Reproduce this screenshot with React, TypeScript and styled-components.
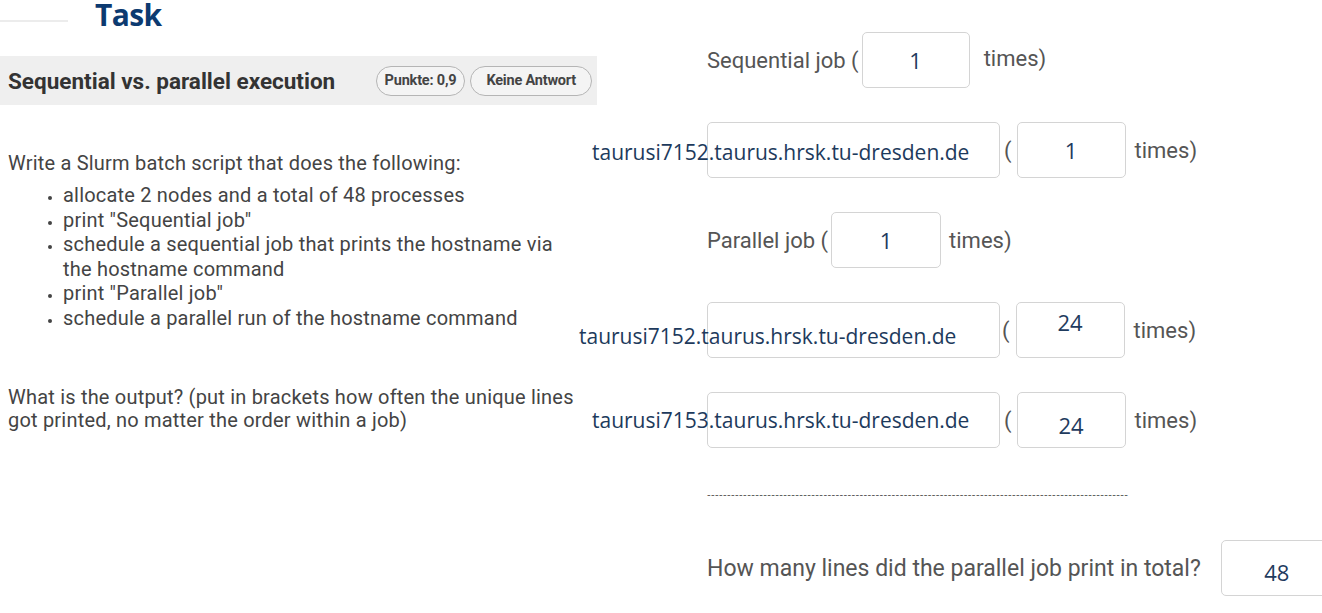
import React from "react";
import styled, { createGlobalStyle } from "styled-components";

const Global = createGlobalStyle`
  html, body { margin: 0; padding: 0; background: #ffffff; overflow: hidden; }
  body { font-family: Roboto, "Liberation Sans", Arial, sans-serif; }
`;

const Page = styled.div`
  display: grid;
  grid-template-columns: 597px 1fr;
  width: 1322px;
  height: 613px;
  overflow: hidden;
`;

const LeftCol = styled.div`
  display: flex;
  flex-direction: column;
`;

const TaskRow = styled.div`
  display: flex;
  align-items: center;
  height: 30px;
`;

const FaintRule = styled.span`
  width: 68px;
  height: 2px;
  background: #ececec;
  margin-top: 12px;
  margin-right: 27px;
`;

const TaskTitle = styled.h1`
  margin: 0;
  font-family: "Open Sans", "Noto Sans", sans-serif;
  font-weight: 700;
  font-size: 30px;
  line-height: 30px;
  letter-spacing: -0.6px;
  color: #0c3a70;
`;

const HeaderBar = styled.div`
  margin-top: 26px;
  height: 49px;
  background: #efefef;
  display: flex;
  align-items: center;
  padding: 0 5px 0 8px;
`;

const QTitle = styled.h2`
  margin: 0;
  flex: 1;
  font-family: Roboto, sans-serif;
  font-weight: 700;
  font-size: 22.5px;
  color: #333333;
  white-space: nowrap;
`;

const Badge = styled.span<{ $px: number }>`
  display: inline-flex;
  align-items: center;
  height: 28px;
  padding: 0 ${(p) => p.$px}px;
  margin-left: 5px;
  border: 1px solid #b5b5b5;
  border-radius: 15px;
  font-family: Roboto, sans-serif;
  font-weight: 700;
  font-size: 14.5px;
  letter-spacing: -0.2px;
  color: #444444;
  background: #f4f4f4;
  white-space: nowrap;
`;

const Body = styled.div`
  padding-left: 8px;
  font-family: Roboto, sans-serif;
  font-size: 20px;
  letter-spacing: 0.2px;
  color: #444444;
`;

const Para = styled.p<{ $top: number; $lh: number; $w?: number }>`
  margin: ${(p) => p.$top}px 0 0 0;
  line-height: ${(p) => p.$lh}px;
  max-width: ${(p) => p.$w ?? 600}px;
`;

const List = styled.ul`
  margin: 8px 0 0 0;
  padding-left: 55px;
  line-height: 24.6px;
  width: 505px;
  li::marker { font-size: 14px; }
`;

const RightCol = styled.div`
  display: flex;
  flex-direction: column;
  padding-left: 110px;
  padding-top: 32px;
`;

const Rows = styled.div`
  display: flex;
  flex-direction: column;
  gap: 34px;
`;

const Row = styled.div`
  display: flex;
  align-items: center;
  height: 56px;
`;

const Label = styled.span<{ $ml?: number; $dy?: number; $size?: number }>`
  font-family: Roboto, sans-serif;
  font-size: ${(p) => p.$size ?? 22}px;
  color: #555555;
  white-space: nowrap;
  margin-left: ${(p) => p.$ml ?? 0}px;
  transform: translateY(${(p) => p.$dy ?? 0}px);
`;

const Box = styled.div<{ $w: number; $ml?: number }>`
  position: relative;
  flex: none;
  box-sizing: border-box;
  width: ${(p) => p.$w}px;
  height: 56px;
  margin-left: ${(p) => p.$ml ?? 0}px;
  border: 1px solid #d4d4d4;
  border-radius: 5px;
  background: #ffffff;
  display: flex;
  align-items: center;
  justify-content: center;
`;

const Value = styled.span<{ $dy?: number }>`
  font-family: "Open Sans", "Noto Sans", sans-serif;
  font-size: 22px;
  color: #1f3b5e;
  transform: translateY(${(p) => p.$dy ?? 0}px);
`;

const HostName = styled.span<{ $left: number; $dy?: number }>`
  position: absolute;
  left: ${(p) => p.$left}px;
  top: 50%;
  transform: translateY(calc(-50% + ${(p) => p.$dy ?? 0}px));
  font-family: "Open Sans", "Noto Sans", sans-serif;
  font-size: 21px;
  color: #1d3a5c;
  white-space: nowrap;
`;

const Dashes = styled.div`
  margin-top: 36px;
  height: 20px;
  white-space: nowrap;
  font-family: "Liberation Sans", Arial, sans-serif;
  font-size: 11px;
  letter-spacing: 0.35px;
  line-height: 20px;
  color: #555555;
`;

const FinalRow = styled(Row)`
  margin-top: 36px;
`;

type HostRowProps = { host: string; left: number; count: string; hostDy?: number; countDy?: number; parenMl?: number };

const HostRow = ({ host, left, count, hostDy, countDy, parenMl = 4 }: HostRowProps) => (
  <Row>
    <Box $w={293}>
      <HostName $left={left} $dy={hostDy}>{host}</HostName>
    </Box>
    <Label $ml={parenMl}>(</Label>
    <Box $w={109} $ml={parenMl === 4 ? 5 : 6}>
      <Value $dy={countDy}>{count}</Value>
    </Box>
    <Label $ml={9}>times)</Label>
  </Row>
);

export default function App() {
  return (
    <>
      <Global />
      <Page>
        <LeftCol>
          <TaskRow>
            <FaintRule />
            <TaskTitle>Task</TaskTitle>
          </TaskRow>
          <HeaderBar>
            <QTitle>Sequential vs. parallel execution</QTitle>
            <Badge $px={8}>Punkte: 0,9</Badge>
            <Badge $px={15}>Keine Antwort</Badge>
          </HeaderBar>
          <Body>
            <Para $top={46} $lh={24}>Write a Slurm batch script that does the following:</Para>
            <List>
              <li>allocate 2 nodes and a total of 48 processes</li>
              <li>print "Sequential job"</li>
              <li>schedule a sequential job that prints the hostname via the hostname command</li>
              <li>print "Parallel job"</li>
              <li>schedule a parallel run of the hostname command</li>
            </List>
            <Para $top={55} $lh={23} $w={582}>
              What is the output? (put in brackets how often the unique lines got printed, no matter the order within a job)
            </Para>
          </Body>
        </LeftCol>
        <RightCol>
          <Rows>
            <Row>
              <Label>Sequential job (</Label>
              <Box $w={108} $ml={3}>
                <Value>1</Value>
              </Box>
              <Label $ml={14} $dy={-2}>times)</Label>
            </Row>
            <HostRow host="taurusi7152.taurus.hrsk.tu-dresden.de" left={-116} count="1" hostDy={2} />
            <Row>
              <Label>Parallel job (</Label>
              <Box $w={110} $ml={3}>
                <Value>1</Value>
              </Box>
              <Label $ml={8}>times)</Label>
            </Row>
            <HostRow host="taurusi7152.taurus.hrsk.tu-dresden.de" left={-129} count="24" hostDy={6} countDy={-8} parenMl={2} />
            <HostRow host="taurusi7153.taurus.hrsk.tu-dresden.de" left={-116} count="24" countDy={5} />
          </Rows>
          <Dashes>{"-".repeat(105)}</Dashes>
          <FinalRow>
            <Label $size={23}>How many lines did the parallel job print in total?</Label>
            <Box $w={112} $ml={20}>
              <Value $dy={4}>48</Value>
            </Box>
          </FinalRow>
        </RightCol>
      </Page>
    </>
  );
}
